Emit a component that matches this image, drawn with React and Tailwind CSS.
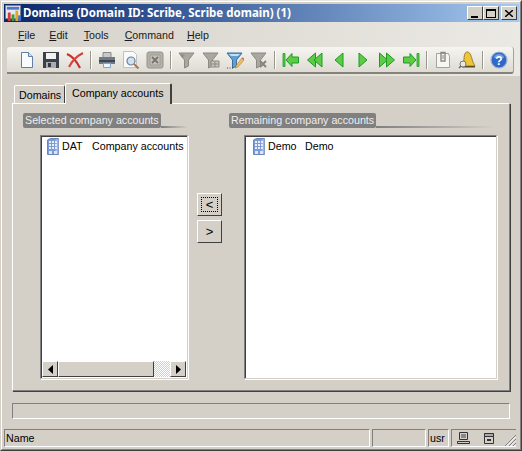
import React from "react";

const Slot = ({ children }) => (
  <div className="w-6 h-6 flex items-center justify-center shrink-0">{children}</div>
);
const Sep = () => (
  <div className="w-2 h-6 flex justify-center shrink-0">
    <div className="w-[2px] h-[18px] mt-[3px] border-l border-l-[#9a978e] border-r border-r-white" />
  </div>
);
const S = ({ children, w = 18, h = 18 }) => (
  <svg width={w} height={h} viewBox="0 0 18 18" className="block">{children}</svg>
);

const NewDoc = () => (
  <S><path d="M3.500 1.500h7l4 4v11h-11z" fill="#f8fbff" stroke="#5f7fa8" /><path d="M10.500 1.500v4h4" fill="#d5e2f2" stroke="#5f7fa8" /></S>
);
const Save = () => (
  <S>
    <path d="M1 1h16v16H1z" fill="#3c4048" />
    <path d="M4 2h10v6H4z" fill="#f2f2f2" />
    <path d="M4 11h10v6H4z" fill="#a9adb2" />
    <path d="M6 12h3v4H6z" fill="#33363c" />
  </S>
);
const Del = () => (
  <S>
    <path d="M1 3 C6 5 11 11 14 17" stroke="#c8302a" strokeWidth="2.200" fill="none" />
    <path d="M17 2 C11 5 6 10 3 16" stroke="#d8403a" strokeWidth="2" fill="none" />
  </S>
);
const Print = () => (
  <S>
    <path d="M5 1.500h8v5H5z" fill="#c9c9c9" stroke="#8a8a8a" />
    <path d="M1 6h16v7H1z" fill="#6f7a88" />
    <path d="M1 9h16v2H1z" fill="#3e4650" />
    <path d="M5.500 12.500h7v4h-7z" fill="#eef6ff" stroke="#7aa8c8" />
  </S>
);
const Preview = () => (
  <S>
    <path d="M1.500 .500h10l3 3v13h-13z" fill="#fafafa" stroke="#c0c0c0" />
    <circle cx="9" cy="10" r="4" fill="#cfe0ee" stroke="#6a8098" strokeWidth="1.200" />
    <path d="M12 13l4.500 4.500" stroke="#a8794a" strokeWidth="2" />
  </S>
);
const Excel = () => (
  <S>
    <rect x="1" y="1" width="16" height="16" rx="2" fill="#b4b1a9" stroke="#96938b" />
    <path d="M4 4h10v10H4z" fill="#c6c3bb" stroke="#a09d95" />
    <path d="M6 6l6 6M12 6l-6 6" stroke="#77746d" strokeWidth="1.800" />
  </S>
);
const Funnel = ({ c = "#a9a79f", d = "#8b8981" }) => (
  <path d="M1 2h15l-5.500 7v6l-4 2V9z" fill={c} stroke={d} />
);
const Filter1 = () => <S><Funnel /><path d="M2 3l5 1-3 3z" fill="#8e8c84" /></S>;
const Filter2 = () => (
  <S><Funnel /><path d="M9 10h8v6H9z" fill="#c8c6be" stroke="#8b8981" /><path d="M9 13h8M13 10v6" stroke="#8b8981" /></S>
);
const Filter3 = () => (
  <S>
    <Funnel c="#5f9fd4" d="#3c6f9c" />
    <path d="M3 3h11l-2 2H5z" fill="#bfe0f5" />
    <path d="M10 15l6-8 2 2-6 7-3 1z" fill="#f1c25e" stroke="#a8743a" strokeWidth=".6" />
    <path d="M15.500 7l2 2 .5-1.500-1-1z" fill="#d8604a" />
    <path d="M1 17h1M3.500 17h1M6 17h1" stroke="#444" />
  </S>
);
const Filter4 = () => (
  <S><Funnel /><path d="M10 10l6 6M16 10l-6 6" stroke="#85837b" strokeWidth="2" /></S>
);
const gf = "#5ccb45";
const gs = "#1f9a24";
const Tri = ({ dir = "l", x = 0 }) => (
  <path
    transform={`translate(${x} 0)`}
    d={dir === "l" ? "M1 9l8-7v14z" : "M9 9L1 2v14z"}
    fill={gf}
    stroke={gs}
    strokeLinejoin="round"
  />
);
const First = () => (
  <S>
    <path d="M1 2.500h2v13H1z" fill={gf} stroke={gs} strokeWidth=".8" />
    <path d="M4 9l6-6.500v3.500h6.500v6H10v3.500z" fill={gf} stroke={gs} strokeLinejoin="round" />
  </S>
);
const PrevFast = () => <S><Tri x={0.500} /><Tri x={7} /></S>;
const Prev = () => <S><Tri x={4} /></S>;
const Next = () => <S><Tri dir="r" x={4} /></S>;
const NextFast = () => <S><Tri dir="r" x={0.500} /><Tri dir="r" x={7.500} /></S>;
const Last = () => (
  <S>
    <path d="M15 2.500h2v13h-2z" fill={gf} stroke={gs} strokeWidth=".8" />
    <path d="M14 9L8 2.500v3.500H1.500v6H8v3.500z" fill={gf} stroke={gs} strokeLinejoin="round" />
  </S>
);
const Clip = () => (
  <S>
    <path d="M2.500 2.500h12l1 3v11h-13z" fill="#f6f6f2" stroke="#a5a39c" />
    <path d="M7 1.500h4V10H7z" fill="none" stroke="#8b8981" strokeWidth="1.400" />
    <path d="M9 4v4" stroke="#8b8981" />
  </S>
);
const Bell = () => (
  <S>
    <path d="M9 1c3 0 4 3 5 7 .6 3 2 5 3 7H4C6 12 6 9 6 7c.3-3 1-6 3-6z" fill="#edc53c" stroke="#8c6a16" strokeWidth=".8" />
    <path d="M4 15h13v1.500H4z" fill="#5a4a20" />
    <circle cx="5" cy="13" r="3" fill="#e4e8ea" stroke="#777" />
    <path d="M3 15l-2 2" stroke="#666" strokeWidth="1.400" />
  </S>
);
const Help = () => (
  <svg width="18" height="18" viewBox="0 0 18 18" className="block">
    <circle cx="9" cy="9" r="8" fill="#2f68c8" stroke="#9fb4d4" strokeWidth="1.200" />
    <path d="M4 7a5 4 0 0 1 10 0z" fill="#6f9fe8" />
    <text x="9" y="13.500" textAnchor="middle" fontSize="12" fontWeight="700" fontFamily="Liberation Sans, sans-serif" fill="#fff">?</text>
  </svg>
);
const AppIcon = () => (
  <svg width="17" height="17" viewBox="0 0 18 18" className="block">
    <path d="M.500 1.500h16v14H.500z" fill="#e8e8f0" stroke="#7c7c84" />
    <path d="M2 3h13v3H2z" fill="#4a78d0" />
    <path d="M3 9h3v9H3z" fill="#d04030" />
    <path d="M7 11h3v7H7z" fill="#3a9a40" />
    <path d="M11 7h3v11h-3z" fill="#e0a820" />
    <path d="M14 12h3v6h-3z" fill="#4a70c8" />
  </svg>
);
const Building = () => (
  <svg width="12" height="17" viewBox="0 0 12 17" className="block shrink-0">
    <path d="M1 1.500L4 .500h7.500V16.500H.500V2z" fill="#7b9ad8" stroke="#6c86b8" />
    <path d="M8.500 1v15h3V1z" fill="#9fb4e0" />
    {[3, 6, 9].map((y) =>
      [2, 5, 8].map((x) => <path key={`${x}-${y}`} d={`M${x} ${y}h2v2h-2z`} fill="#e8eefa" />)
    )}
    <path d="M2 13h3v3H2zM7 13h3v3H7z" fill="#dde6f8" />
  </svg>
);
const Tri2 = ({ r }) => (
  <svg width="5" height="9" viewBox="0 0 5 9" className="block">
    <path d={r ? "M0 0l5 4.500L0 9z" : "M5 0L0 4.500 5 9z"} fill="#000" />
  </svg>
);
const ScrollBtn = ({ r }) => (
  <div className="w-[16px] h-[16px] bg-[#d4d0c8] border border-t-white border-l-white border-r-[#404040] border-b-[#404040] flex items-center justify-center shrink-0">
    <Tri2 r={r} />
  </div>
);
const CapBtn = ({ children }) => (
  <div className="w-[16px] h-[14px] bg-[#d4d0c8] border border-t-white border-l-white border-r-[#404040] border-b-[#404040] flex items-center justify-center shrink-0">
    {children}
  </div>
);
const GroupLabel = ({ children, w, line }) => (
  <div className="flex items-end h-[15px]">
    <div className={`h-[15px] ${w} bg-[#808080] text-[#eeeeee] rounded-[2px] pl-[2px] leading-[15px] whitespace-nowrap shrink-0`}>
      {children}
    </div>
    <div className={`h-[2px] ${line} bg-gradient-to-r from-[#808080] to-[#d4d0c8]`} />
  </div>
);
const Sunken = ({ className = "", children }) => (
  <div className={`h-[18px] border border-t-[#808080] border-l-[#808080] border-r-white border-b-white shrink-0 ${className}`}>
    {children}
  </div>
);
const List = ({ w, children }) => (
  <div className={`${w} h-[244px] mt-[7px] border border-t-[#808080] border-l-[#808080] border-r-[#d4d0c8] border-b-[#d4d0c8] shadow-[inset_1px_1px_0_#404040,1px_1px_0_#fff] bg-white relative flex flex-col`}>
    {children}
  </div>
);
const ListRow = ({ children }) => (
  <div className="flex items-center h-[17px] mt-[1px] text-black">{children}</div>
);

export default function App() {
  return (
    <div
      className="w-[522px] h-[451px] bg-[#d4d0c8] overflow-hidden border border-t-[#e8e6e0] border-l-[#d4d0c8] border-r-[#404040] border-b-[#404040] text-[10.700px] text-black relative"
      style={{ fontFamily: '"Liberation Sans", Arial, sans-serif' }}
    >
      <div className="h-full border border-t-white border-l-white border-r-[#808080] border-b-[#808080] p-[1px] flex flex-col">
        {/* title bar */}
        <div className="h-[18px] mt-[1px] ml-[1px] bg-gradient-to-r from-[#0a246a] to-[#a6caf0] flex items-center shrink-0">
          <div className="w-[17px] ml-[1px] -mt-[1px] shrink-0"><AppIcon /></div>
          <div className="ml-[1px] text-white font-bold text-[11.500px] leading-[18px] whitespace-nowrap" style={{ fontFamily: '"Noto Sans", sans-serif' }}>
            Domains (Domain ID: Scribe, Scribe domain) (1)
          </div>
          <div className="ml-auto mr-[2px] flex">
            <CapBtn><div className="w-[7px] h-[2px] bg-black mt-[7px] -ml-[2px]" /></CapBtn>
            <CapBtn><div className="w-[10px] h-[9px] border border-black border-t-2" /></CapBtn>
            <div className="ml-[2px]">
              <CapBtn>
                <svg width="8" height="7" viewBox="0 0 8 7"><path d="M0 0l8 7M8 0L0 7" stroke="#000" strokeWidth="1.500" /></svg>
              </CapBtn>
            </div>
          </div>
        </div>

        {/* menu + toolbar band */}
        <div className="h-[54px] -mx-[1px] bg-gradient-to-r from-[#d6d2ca] to-[#ebe9e4] shrink-0 flex flex-col">
          <div className="h-[25px] pt-[1px] pl-[16px] flex items-center text-[10.700px] text-[#1a1a1a]">
            <span className="mr-[14px]"><u>F</u>ile</span>
            <span className="mr-[16px]"><u>E</u>dit</span>
            <span className="mr-[16px]"><u>T</u>ools</span>
            <span className="mr-[13px]"><u>C</u>ommand</span>
            <span><u>H</u>elp</span>
          </div>
          <div className="ml-[5px] mr-[6px] h-[27px] bg-gradient-to-b from-[#f6f5f1] to-[#dedbd3] rounded-tr-[3px] rounded-br-[3px] rounded-tl-[3px] border-b-2 border-b-[#85827a] border-r border-r-[#a5a29a] pl-[8px] flex items-center">
            <Slot><NewDoc /></Slot><Slot><Save /></Slot><Slot><Del /></Slot>
            <Sep />
            <Slot><Print /></Slot><Slot><Preview /></Slot><Slot><Excel /></Slot>
            <Sep />
            <Slot><Filter1 /></Slot><Slot><Filter2 /></Slot><Slot><Filter3 /></Slot><Slot><Filter4 /></Slot>
            <Sep />
            <Slot><First /></Slot><Slot><PrevFast /></Slot><Slot><Prev /></Slot><Slot><Next /></Slot><Slot><NextFast /></Slot><Slot><Last /></Slot>
            <Sep />
            <Slot><Clip /></Slot><Slot><Bell /></Slot>
            <Sep />
            <Slot><Help /></Slot>
          </div>
        </div>

        {/* tabs */}
        <div className="h-[26px] mt-[1px] shrink-0 flex items-end pl-[11px] relative z-10">
          <div className="w-[51px] h-[18px] bg-[#d4d0c8] border-t border-l border-t-white border-l-white border-r border-r-[#404040] rounded-t-[2px] pl-[4px] leading-[19px] whitespace-nowrap">Domains</div>
          <div className="w-[107px] h-[21px] -mb-[1px] bg-[#d4d0c8] border-t border-l border-t-white border-l-white border-r-2 border-r-[#404040] rounded-t-[2px] pl-[6px] leading-[18px] whitespace-nowrap">Company accounts</div>
        </div>

        {/* tab panel */}
        <div className="w-[498px] h-[288px] ml-[9px] border border-t-white border-l-white border-r-[#808080] border-b-[#808080] shadow-[1px_1px_0_#404040] pl-[10px] pt-[9px] flex shrink-0">
          <div className="w-[165px] shrink-0">
            <GroupLabel w="w-[138px]" line="w-[28px]">Selected company accounts</GroupLabel>
            <div className="pl-[17px]">
              <List w="w-[148px]">
                <div className="flex-1 pl-[6px] pt-[1px]">
                  <ListRow>
                    <Building />
                    <span className="ml-[3px] w-[30px]">DAT</span>
                    <span className="whitespace-nowrap">Company accounts</span>
                  </ListRow>
                </div>
                <div className="h-[16px] mx-[1px] mb-[1px] flex shrink-0">
                  <ScrollBtn />
                  <div className="w-[96px] border border-t-white border-l-white border-r-[#404040] border-b-[#404040] bg-[#d4d0c8] shrink-0" />
                  <div className="flex-1 bg-[repeating-conic-gradient(#ffffff_0_25%,#d4d0c8_0_50%)] bg-[length:2px_2px]" />
                  <ScrollBtn r />
                </div>
              </List>
            </div>
          </div>

          <div className="w-[25px] ml-[9px] mr-[7px] shrink-0 pt-[80px] flex flex-col gap-[4px]">
            <div className="w-[25px] h-[23px] bg-[#d4d0c8] border border-t-white border-l-white border-r-[#404040] border-b-[#404040] p-[3px] shrink-0">
              <div className="w-full h-full border border-dotted border-black flex items-center justify-center text-[13px] leading-none">&lt;</div>
            </div>
            <div className="w-[25px] h-[23px] bg-[#d4d0c8] border border-t-white border-l-white border-r-[#404040] border-b-[#404040] flex items-center justify-center text-[13px] leading-none shrink-0">&gt;</div>
          </div>

          <div className="w-[268px] shrink-0">
            <GroupLabel w="w-[147px]" line="w-[118px]">Remaining company accounts</GroupLabel>
            <div className="pl-[15px]">
              <List w="w-[253px]">
                <div className="flex-1 pl-[8px] pt-[1px]">
                  <ListRow>
                    <Building />
                    <span className="ml-[3px] w-[37px]">Demo</span>
                    <span>Demo</span>
                  </ListRow>
                </div>
              </List>
            </div>
          </div>
        </div>

        {/* progress */}
        <div className="w-[498px] h-[16px] ml-[9px] mt-[12px] border border-t-[#808080] border-l-[#808080] border-r-white border-b-white shrink-0" />

        {/* status bar */}
        <div className="mt-[10px] ml-[1px] flex gap-[2px] shrink-0">
          <Sunken className="w-[366px] pl-[1px] leading-[16px]">Name</Sunken>
          <Sunken className="w-[54px]" />
          <Sunken className="w-[21px] pl-[1px] leading-[16px]">usr</Sunken>
          <Sunken className="w-[65px] relative border-r-0 flex items-center">
            <svg width="13" height="12" viewBox="0 0 13 12" className="ml-[5px] block">
              <path d="M2.500.500h8v7h-8z" fill="#d4d0c8" stroke="#333" />
              <path d="M4 2h5v4H4z" fill="#888" />
              <path d="M.500 9.500h12v2H.500z" fill="#d4d0c8" stroke="#333" />
            </svg>
            <svg width="10" height="12" viewBox="0 0 10 12" className="ml-[14px] block">
              <path d="M.500 1.500h9v10h-9z" fill="#d4d0c8" stroke="#333" />
              <path d="M.500 1.500h9v3h-9z" fill="#aaa" stroke="#333" />
              <path d="M3 7h4v2H3z" fill="#333" />
            </svg>
            <svg width="12" height="12" viewBox="0 0 12 12" className="absolute right-0 bottom-0 block">
              <path d="M12 1L1 12M12 5l-7 7M12 9l-3 3" stroke="#808080" strokeWidth="1" />
              <path d="M12 2.500L2.500 12M12 6.500L6.500 12M12 10.500L10.500 12" stroke="#fff" strokeWidth="1" />
            </svg>
          </Sunken>
        </div>
      </div>
    </div>
  );
}
